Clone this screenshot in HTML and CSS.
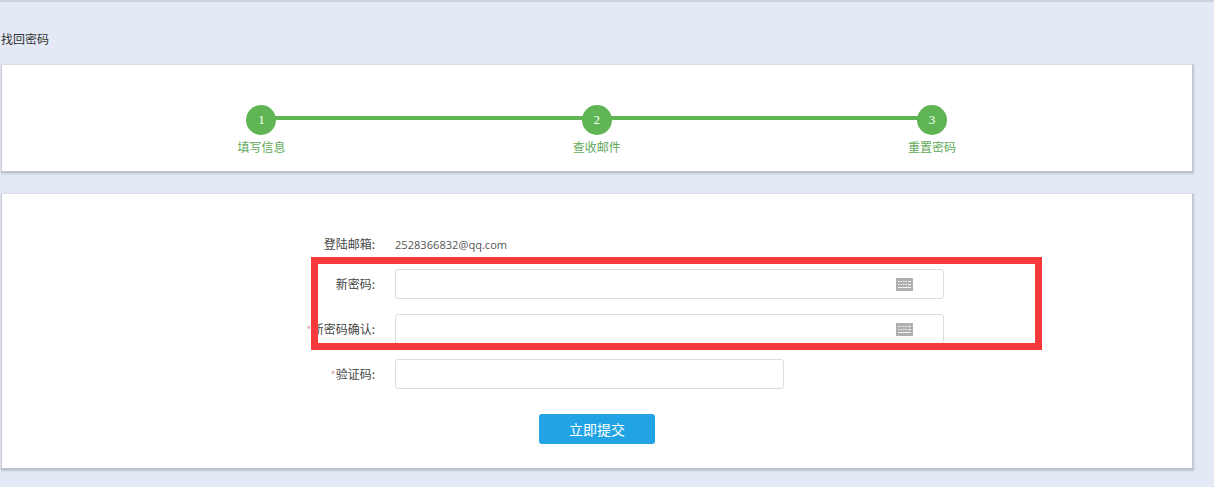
FILE: index.html
```html
<!DOCTYPE html>
<html lang="zh-CN">
<head>
<meta charset="utf-8">
<title>找回密码</title>
<link rel="stylesheet" href="styles.css">
</head>
<body>
<div class="page">
  <h1 class="title">找回密码</h1>
  <section class="card steps-card">
    <ol class="steps">
      <li class="step"><span class="dot">1</span><span class="step-label">填写信息</span></li>
      <li class="step"><span class="dot">2</span><span class="step-label">查收邮件</span></li>
      <li class="step"><span class="dot">3</span><span class="step-label">重置密码</span></li>
    </ol>
  </section>
  <section class="card form-card">
    <form class="form">
      <div class="row row-text">
        <span class="label">登陆邮箱:</span>
        <span class="value">2528366832@qq.com</span>
      </div>
      <div class="row">
        <label class="label">新密码:</label>
        <div class="field field-wide">
          <svg class="kbd" viewBox="0 0 17 13" width="17" height="13"><rect width="17" height="13" fill="#b0b0b0"/><path d="M2 3.5h1.5M4.5 3.5h1.5M7 3.5h1.5M9.5 3.5h1.5M12 3.5h3M2 6.5h1.5M4.5 6.5h1.5M7 6.5h1.5M9.5 6.5h1.5M12 6.5h3M2 9.5h13" stroke="#f2f2f2" stroke-width="1.2" fill="none"/></svg>
        </div>
      </div>
      <div class="row">
        <label class="label"><span class="star">*</span>新密码确认:</label>
        <div class="field field-wide">
          <svg class="kbd" viewBox="0 0 17 13" width="17" height="13"><rect width="17" height="13" fill="#b0b0b0"/><path d="M2 3.5h1.5M4.5 3.5h1.5M7 3.5h1.5M9.5 3.5h1.5M12 3.5h3M2 6.5h1.5M4.5 6.5h1.5M7 6.5h1.5M9.5 6.5h1.5M12 6.5h3M2 9.5h13" stroke="#f2f2f2" stroke-width="1.2" fill="none"/></svg>
        </div>
      </div>
      <div class="row">
        <label class="label"><span class="star">*</span>验证码:</label>
        <div class="field field-narrow"></div>
      </div>
      <div class="actions"><button type="button" class="submit">立即提交</button></div>
    </form>
  </section>
  <div class="highlight"></div>
</div>
</body>
</html>
```

FILE: styles.css
```css
* { box-sizing: border-box; }
html, body { margin: 0; padding: 0; }
body {
  background: #e3e9f5;
  font-family: "Noto Sans CJK SC", "Liberation Sans", sans-serif;
  font-size: 13px;
  color: #333;
}
.page {
  position: relative;
  height: 487px;
  overflow: hidden;
  border-top: 2px solid #cdd3e0;
  padding: 27px 20px 0 1px;
}
.title {
  margin: 0 0 15px;
  height: 20px;
  line-height: 20px;
  font-size: 12px;
  font-weight: 400;
  color: #333;
}
.card {
  background: #fff;
  border: 1px solid #dcdfe6;
  border-left-color: #c9ccd4;
  border-right: 2px solid #c6cad4;
  border-bottom: 2px solid #bfc3cd;
  box-shadow: 0 1px 2px rgba(120, 125, 140, 0.3);
}
.steps-card {
  height: 109px;
  margin-bottom: 20px;
  padding: 40px 0.5px 0 0;
}
.steps {
  position: relative;
  list-style: none;
  margin: 0 auto;
  padding: 0;
  width: 1006px;
  display: grid;
  grid-template-columns: repeat(3, 1fr);
}
.steps::before {
  content: "";
  position: absolute;
  left: 168px;
  right: 168px;
  top: 11px;
  height: 4px;
  background: #5fb554;
}
.step {
  position: relative;
  display: flex;
  flex-direction: column;
  align-items: center;
}
.dot {
  width: 30px;
  height: 30px;
  border-radius: 50%;
  background: #5fb554;
  color: #fff;
  font-family: "Liberation Serif", serif;
  font-size: 13px;
  line-height: 30px;
  text-align: center;
}
.step-label {
  margin-top: 2px;
  line-height: 20px;
  font-size: 12px;
  color: #62a95a;
}
.form-card {
  height: 277px;
  padding-top: 39px;
}
.form {
  display: flex;
  flex-direction: column;
  gap: 15px;
}
.row {
  display: flex;
  align-items: center;
  height: 30px;
}
.row-text { height: 22px; margin-bottom: -1px; }
.label {
  width: 373px;
  flex: none;
  text-align: right;
  font-size: 12px;
  color: #444;
  padding-bottom: 1px;
}
.star { color: #e6a0a0; font-size: 11px; }
.value {
  margin-left: 20px;
  font-family: "Open Sans", "Liberation Sans", sans-serif;
  font-size: 11.1px;
  color: #555;
}
.field {
  margin-left: 20px;
  height: 30px;
  background: #fff;
  border: 1px solid #dcdcdc;
  border-radius: 3px;
  display: flex;
  align-items: center;
  justify-content: flex-end;
}
.field-wide { width: 549px; padding-right: 30px; }
.field-narrow { width: 389px; }
.kbd { display: block; }
.actions {
  display: flex;
  justify-content: center;
  margin-top: 10px;
}
.submit {
  width: 116px;
  height: 30px;
  border: 0;
  border-radius: 3px;
  background: #22a4e4;
  color: #fff;
  font-family: inherit;
  font-size: 14px;
  padding: 0;
}
.highlight {
  position: absolute;
  left: 311px;
  top: 255px;
  width: 731px;
  height: 93px;
  border: 7px solid #f63a3c;
}
```
